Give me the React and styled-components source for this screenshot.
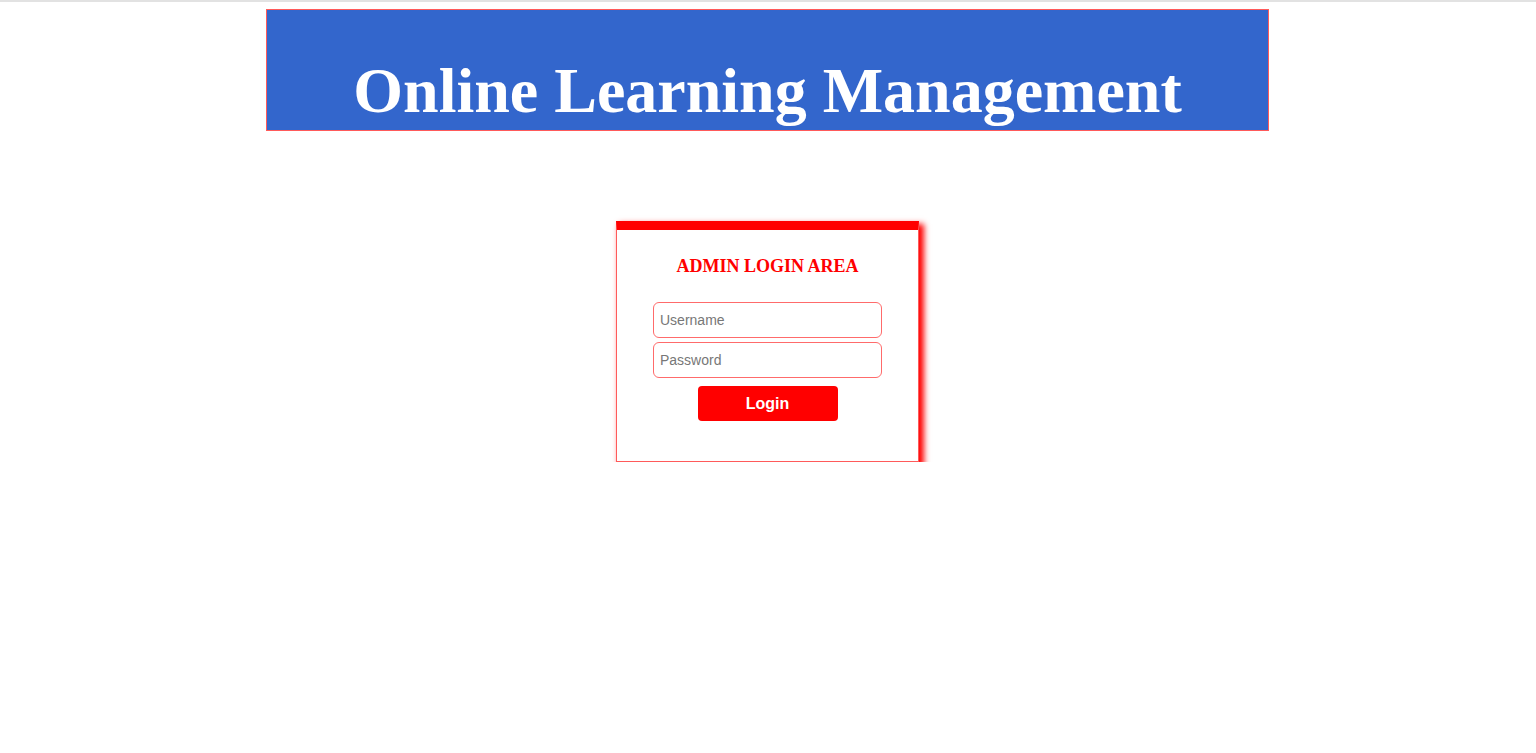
import styled, { createGlobalStyle } from "styled-components";

const GlobalStyle = createGlobalStyle`
  html, body {
    margin: 0;
    padding: 0;
    background: #fff;
  }
  body {
    border-top: 2px solid #e2e2e2;
    font-family: "Liberation Serif", "Times New Roman", serif;
  }
`;

export default function App() {
  return (
    <>
      <GlobalStyle />
      <Page>
        <Header>
          <Title>Online Learning Management</Title>
        </Header>
        <LoginBox>
          <BoxTitle>ADMIN LOGIN AREA</BoxTitle>
          <Form onSubmit={(e) => e.preventDefault()}>
            <Field type="text" placeholder="Username" />
            <Field type="password" placeholder="Password" />
            <Button type="submit">Login</Button>
          </Form>
        </LoginBox>
      </Page>
    </>
  );
}

const Page = styled.div`
  display: flex;
  flex-direction: column;
  align-items: center;
  padding-top: 7px;
  padding-right: 1px;
`;

const Header = styled.header`
  box-sizing: border-box;
  width: 1003px;
  height: 122px;
  padding-top: 49px;
  background-color: #3366cc;
  border: 1px solid #ff5a5a;
  display: flex;
  justify-content: center;
  overflow: hidden;
`;

const Title = styled.h1`
  margin: 0;
  color: #fff;
  font-family: "Liberation Serif", "Times New Roman", serif;
  font-size: 64px;
  font-weight: bold;
  line-height: 1;
`;

const LoginBox = styled.div`
  margin-top: 90px;
  width: 301px;
  height: 231px;
  border: 1px solid #ff5a5a;
  border-top: 9px solid #ff0000;
  box-shadow: 4px 4px 6px 1px #ff0000;
  display: flex;
  flex-direction: column;
  align-items: center;
`;

const BoxTitle = styled.h3`
  margin: 26px 0 0;
  color: #ff0000;
  font-family: "Liberation Serif", "Times New Roman", serif;
  font-size: 18px;
  font-weight: bold;
`;

const Form = styled.form`
  margin-top: 25px;
  display: flex;
  flex-direction: column;
  align-items: center;
  gap: 4px;
`;

const Field = styled.input`
  box-sizing: border-box;
  width: 229px;
  height: 36px;
  padding: 0 6px;
  border: 1px solid #ff6b6b;
  border-radius: 6px;
  font-family: "Liberation Sans", Arial, sans-serif;
  font-size: 14px;
  outline: none;

  &::placeholder {
    color: #777;
  }
`;

const Button = styled.button`
  margin-top: 4px;
  width: 140px;
  height: 35px;
  border: none;
  border-radius: 4px;
  background-color: #ff0000;
  color: #fff;
  font-family: "Liberation Sans", Arial, sans-serif;
  font-size: 16px;
  font-weight: bold;
  cursor: pointer;
`;
